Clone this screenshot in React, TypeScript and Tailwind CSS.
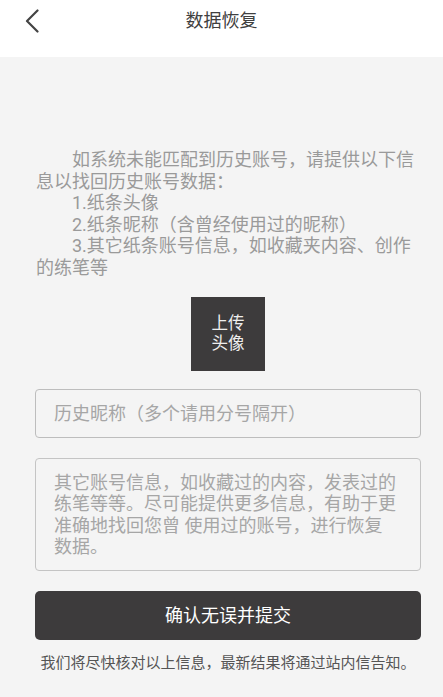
import { useState } from 'react'

export default function App() {
  const [nickname, setNickname] = useState('')
  const [extra, setExtra] = useState('')

  return (
    <div className="min-h-[697px] bg-[#f4f4f4] font-['Roboto','Noto_Sans_CJK_SC',sans-serif]">
      {/* Header */}
      <div className="h-[57px] bg-white">
        <div className="relative flex h-[42px] items-center justify-center">
          <button className="absolute left-[25px] top-[9px] text-[#444]">
            <svg width="14" height="24" viewBox="0 0 14 24" fill="none">
              <polyline points="12.5,1.5 2,12 12.5,22.5" stroke="currentColor" strokeWidth="2.2" strokeLinecap="round" strokeLinejoin="round" />
            </svg>
          </button>
          <h1 className="text-[18px] leading-none text-[#404040]">数据恢复</h1>
        </div>
      </div>

      <div className="pl-[35px] pr-[22px] pt-[92px]">
        {/* Description */}
        <div className="pl-px text-[18px] leading-[21.6px] text-[#9a9a9a]">
          <p className="indent-[36px]">如系统未能匹配到历史账号，请提供以下信息以找回历史账号数据：</p>
          <p className="indent-[36px]">1.纸条头像</p>
          <p className="indent-[36px]">2.纸条昵称（含曾经使用过的昵称）</p>
          <p className="indent-[36px]">3.其它纸条账号信息，如收藏夹内容、创作的练笔等</p>
        </div>

        {/* Avatar upload */}
        <div className="mt-[18px] flex justify-center">
          <button className="flex h-[74px] w-[74px] flex-col items-center justify-center bg-[#3d3b3c] text-[16.5px] leading-[20px] text-[#eeeeee]">
            <span>上传</span>
            <span>头像</span>
          </button>
        </div>

        {/* Nickname */}
        <input
          value={nickname}
          onChange={e => setNickname(e.target.value)}
          placeholder="历史昵称（多个请用分号隔开）"
          className="mt-[18px] block h-[49px] w-full rounded-[4px] border border-[#bdbdbd] bg-transparent px-[18px] text-[18px] text-[#555] outline-none placeholder:text-[#a6a6a6]"
        />

        {/* Other info */}
        <textarea
          value={extra}
          onChange={e => setExtra(e.target.value)}
          placeholder="其它账号信息，如收藏过的内容，发表过的练笔等等。尽可能提供更多信息，有助于更准确地找回您曾 使用过的账号，进行恢复数据。"
          className="mt-[20px] block h-[113px] w-full resize-none overflow-hidden rounded-[4px] border border-[#c4c4c4] bg-transparent pl-[18px] pr-[23px] pt-[13px] text-[18px] leading-[21.6px] text-[#555] outline-none placeholder:text-[#a6a6a6]"
        />

        {/* Submit */}
        <button className="mt-[20px] flex h-[49px] w-full items-center justify-center rounded-[5px] bg-[#3d3b3c] text-[18px] text-white">
          确认无误并提交
        </button>

        <p className="mt-[14px] text-center text-[15px] leading-[18px] text-[#555]">
          我们将尽快核对以上信息，最新结果将通过站内信告知。
        </p>
      </div>
    </div>
  )
}
